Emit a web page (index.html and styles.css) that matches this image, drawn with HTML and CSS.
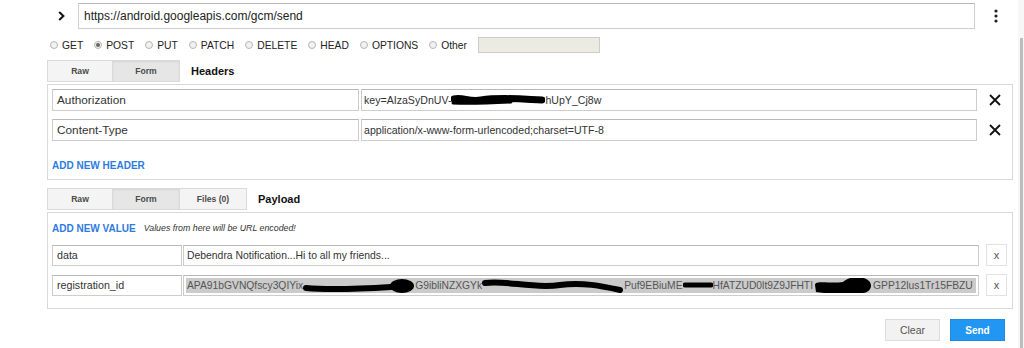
FILE: index.html
```html
<!DOCTYPE html>
<html>
<head>
<meta charset="utf-8">
<link rel="stylesheet" href="styles.css">
</head>
<body>
<div class="screen">
  <div class="app">
    <div class="urlbar">
      <svg class="chev" width="7" height="10" viewBox="0 0 7 10"><path d="M1.2 1 L5.4 5 L1.2 9" fill="none" stroke="#111" stroke-width="2"/></svg>
      <div class="url">https://android.googleapis.com/gcm/send</div>
      <svg class="dots" width="4" height="14" viewBox="0 0 4 14"><circle cx="2" cy="2" r="1.6" fill="#222"/><circle cx="2" cy="7" r="1.6" fill="#222"/><circle cx="2" cy="12" r="1.6" fill="#222"/></svg>
    </div>

    <div class="methods">
      <label class="m"><span class="radio"></span>GET</label>
      <label class="m"><span class="radio checked"></span>POST</label>
      <label class="m"><span class="radio"></span>PUT</label>
      <label class="m"><span class="radio"></span>PATCH</label>
      <label class="m"><span class="radio"></span>DELETE</label>
      <label class="m"><span class="radio"></span>HEAD</label>
      <label class="m"><span class="radio"></span>OPTIONS</label>
      <label class="m"><span class="radio"></span>Other</label>
      <span class="other-input"></span>
    </div>

    <div class="tabs">
      <div class="tab">Raw</div>
      <div class="tab active">Form</div>
      <div class="tab-title">Headers</div>
    </div>
    <div class="panel headers">
      <div class="hrow">
        <div class="field hkey">Authorization</div>
        <div class="field hval">key=AIzaSyDnUV-<svg class="blob" width="94" height="12" viewBox="0 0 94 12"><path d="M3 5 C12 3 18 8 30 6 C50 3 70 5 91 6" fill="none" stroke="#000" stroke-width="7" stroke-linecap="round"/><path d="M2 9 C20 10 40 9 60 8" fill="none" stroke="#000" stroke-width="3" stroke-linecap="round"/></svg>hUpY_Cj8w</div>
        <span class="del"><svg width="12" height="12" viewBox="0 0 12 12"><path d="M1 1 L11 11 M11 1 L1 11" stroke="#111" stroke-width="1.8"/></svg></span>
      </div>
      <div class="hrow">
        <div class="field hkey">Content-Type</div>
        <div class="field hval">application/x-www-form-urlencoded;charset=UTF-8</div>
        <span class="del"><svg width="12" height="12" viewBox="0 0 12 12"><path d="M1 1 L11 11 M11 1 L1 11" stroke="#111" stroke-width="1.8"/></svg></span>
      </div>
      <div class="add">ADD NEW HEADER</div>
    </div>

    <div class="tabs payload-tabs">
      <div class="tab">Raw</div>
      <div class="tab active">Form</div>
      <div class="tab">Files (0)</div>
      <div class="tab-title">Payload</div>
    </div>
    <div class="panel payload">
      <div class="add-line"><span class="add">ADD NEW VALUE</span><span class="note">Values from here will be URL encoded!</span></div>
      <div class="prow">
        <div class="field pkey">data</div>
        <div class="field pval">Debendra Notification...Hi to all my friends...</div>
        <span class="xbtn">x</span>
      </div>
      <div class="prow">
        <div class="field pkey">registration_id</div>
        <div class="field pval sel-wrap"><span class="sel">APA91bGVNQfscy3QIYix<svg class="blob" width="112" height="18" viewBox="0 0 112 18"><path d="M3 12 C25 14 55 13 88 11" fill="none" stroke="#000" stroke-width="6" stroke-linecap="round"/><ellipse cx="99" cy="10" rx="12" ry="7" fill="#000"/></svg>G9ibliNZXGYk<svg class="blob" width="142" height="16" viewBox="0 0 142 16"><path d="M3 6 C25 3 50 12 78 8 C100 5 120 9 138 13" fill="none" stroke="#000" stroke-width="6" stroke-linecap="round"/></svg>Puf9EBiuME<svg class="blob" width="30" height="12" viewBox="0 0 30 12"><path d="M2 6 L28 6" stroke="#000" stroke-width="5" stroke-linecap="round"/></svg>HfATZUD0lt9Z9JFHTI<svg class="blob" width="60" height="20" viewBox="0 0 60 20"><path d="M2 10 C2 5 18 9 30 7 C36 1 50 0 56 6 C60 10 58 17 50 18 C36 19 14 19 3 17 Z" fill="#000"/></svg>GPP12lus1Tr15FBZU</span></div>
        <span class="xbtn">x</span>
      </div>
    </div>

    <div class="actions">
      <button class="btn clear">Clear</button>
      <button class="btn send">Send</button>
    </div>
  </div>
  <div class="scrollbar"><div class="thumb"></div></div>
</div>
</body>
</html>
```

FILE: styles.css
```css
* { box-sizing: border-box; }
html, body { margin: 0; padding: 0; background: #fff; }
body {
  font-family: "Liberation Sans", Arial, sans-serif;
  color: #222;
  width: 1024px;
  height: 348px;
  overflow: hidden;
}
.screen { display: flex; height: 348px; }
.app { width: 1018px; flex: none; padding: 3px 0 0 47px; }
.app > * { width: 966px; }

/* url bar */
.urlbar { display: flex; align-items: center; height: 26px; }
.chev { margin-left: 11px; flex: none; }
.url {
  margin-left: 13px;
  width: 897px;
  height: 26px;
  border: 1px solid #cfcfcf;
  border-top-color: #b9b9b9;
  font-size: 12px;
  line-height: 24px;
  padding-left: 5px;
  color: #222;
}
.dots { margin-left: 19px; flex: none; }

/* methods */
.methods {
  display: flex;
  align-items: center;
  height: 16px;
  margin-top: 8px;
  padding-left: 3px;
  font-size: 10.3px;
  color: #222;
}
.m { display: flex; align-items: center; margin-right: 11px; }
.radio {
  width: 8px; height: 8px;
  border-radius: 50%;
  border: 1px solid #b5b5b5;
  background: #f1f1f1;
  margin-right: 4px;
  display: inline-flex;
  align-items: center;
  justify-content: center;
}
.radio.checked::after {
  content: "";
  width: 4px; height: 4px;
  border-radius: 50%;
  background: #666;
}
.other-input {
  width: 122px;
  height: 16px;
  border: 1px solid #cdcdc6;
  background: #ebebe4;
}

/* tabs */
.tabs { display: flex; align-items: center; height: 22px; margin-top: 7px; margin-bottom: 2px; }
.payload-tabs { margin-top: 8px; }
.tab {
  width: 66px;
  height: 22px;
  border: 1px solid #dadada;
  background: #f4f4f4;
  font-size: 8.6px;
  font-weight: bold;
  color: #4a4a4a;
  display: flex;
  align-items: center;
  justify-content: center;
}
.tab + .tab { border-left: none; width: 67px; }
.tab.active { background: #e6e6e6; box-shadow: inset 0 1px 2px rgba(0,0,0,.08); }
.tab-title { margin-left: 11px; font-size: 11px; font-weight: bold; color: #111; }

/* panels */
.panel { border: 1px solid #d9d9d9; background: #fff; }
.headers { height: 96px; padding: 4px 0 0 4px; }
.hrow { display: flex; align-items: center; height: 22px; margin-bottom: 8px; }
.field {
  height: 100%;
  border: 1px solid #cdcdcd;
  border-top-color: #b8b8b8;
  background: #fff;
  white-space: nowrap;
  overflow: hidden;
  display: flex;
  align-items: center;
}
.hkey { width: 307px; font-size: 11.8px; padding-left: 4px; color: #333; }
.hval { width: 616px; margin-left: 2px; font-size: 10.6px; padding-left: 2px; color: #333; }
.del { width: 35px; display: flex; justify-content: center; align-items: center; }
.blob { display: inline-block; vertical-align: middle; flex: none; }
.headers .add { margin-top: 19px; }
.add { font-size: 10px; font-weight: bold; color: #2e7be0; }

.payload { height: 97px; padding: 6px 0 0 4px; }
.add-line { display: flex; align-items: center; height: 18px; margin-bottom: 7px; }
.note { font-size: 8.8px; font-style: italic; color: #333; margin-left: 8px; }
.prow { display: flex; align-items: center; height: 22px; margin-bottom: 8px; }
.prow .field { height: 21px; }
.pkey { width: 130px; font-size: 10.7px; padding-left: 4px; color: #333; }
.pval { width: 796px; margin-left: 1px; font-size: 10.4px; padding-left: 3px; color: #333; }
.sel-wrap { padding: 2px; }
.sel {
  display: flex;
  align-items: center;
  height: 100%;
  width: 100%;
  background: #cbcbcb;
  color: #555;
  padding-left: 1px;
  white-space: nowrap;
  overflow: hidden;
  font-size: 10.3px;
}
.xbtn {
  width: 21px; height: 22px;
  margin-left: 7px;
  border: 1px solid #e2e2e2;
  background: #fff;
  font-size: 11px;
  color: #555;
  display: flex; align-items: center; justify-content: center;
}

/* actions */
.actions { display: flex; justify-content: flex-end; gap: 10px; margin-top: 10px; padding-right: 8px; }
.btn {
  width: 55px; height: 22px;
  font-family: "Liberation Sans", Arial, sans-serif;
  font-size: 10.5px;
  border: 1px solid #dcdcdc;
  padding: 0;
}
.clear { background: #f2f2f2; color: #555; }
.send { background: #2196f3; border-color: #1e8ae0; color: #fff; font-weight: bold; font-size: 10px; }

/* scrollbar */
.scrollbar { width: 6px; background: #f7f7f7; display: flex; flex-direction: column; }
.thumb { margin-top: 38px; margin-left: 2px; width: 3px; flex: 1; background: #bdbdbd; }
```
